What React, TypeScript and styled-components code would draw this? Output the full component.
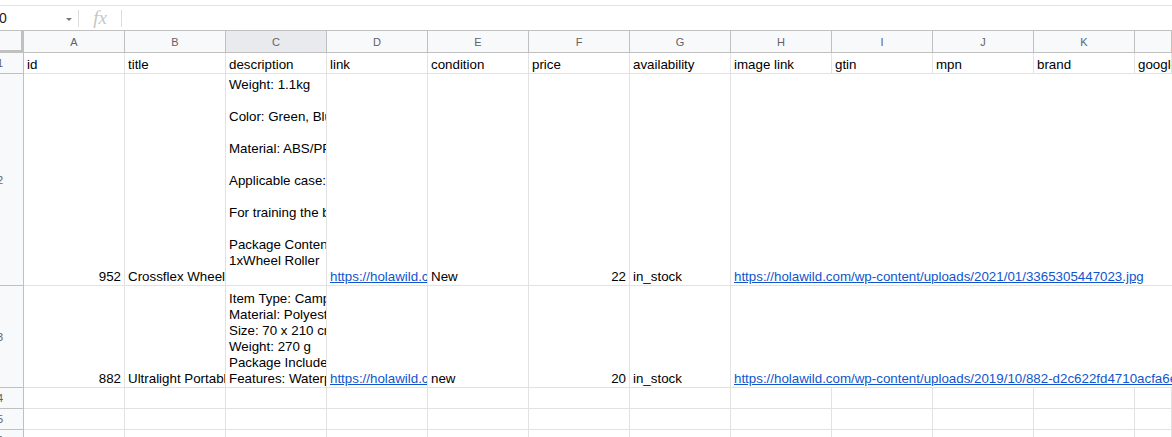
import React from 'react';
import styled, { createGlobalStyle } from 'styled-components';

const GlobalStyle = createGlobalStyle`
  html, body {
    margin: 0;
    padding: 0;
    background: #fff;
    overflow: hidden;
  }
  body {
    font-family: "Liberation Sans", Arial, sans-serif;
  }
`;

const Page = styled.div`
  width: 1172px;
  height: 437px;
  overflow: hidden;
  background: #fff;
`;

const TopStrip = styled.div`
  height: 5px;
  border-bottom: 1px solid #e3e3e3;
`;

const FormulaBar = styled.div`
  display: flex;
  align-items: center;
  height: 24px;
`;

const NameBox = styled.div`
  width: 79px;
  display: flex;
  align-items: center;
  justify-content: space-between;
  padding-right: 6px;
  box-sizing: border-box;
  font-size: 14px;
  color: #202124;
  margin-left: -1px;
`;

const Caret = styled.span`
  width: 0;
  height: 0;
  border-left: 3px solid transparent;
  border-right: 3px solid transparent;
  border-top: 3px solid #777;
  margin-top: 2px;
`;

const Divider = styled.div`
  width: 1px;
  height: 17px;
  background: #dadce0;
`;

const FxLabel = styled.div`
  width: 42px;
  text-align: center;
  font-family: "Liberation Serif", serif;
  font-style: italic;
  font-size: 19px;
  color: #c4c7c5;
  line-height: 20px;
`;

const Grid = styled.div`
  display: flex;
  flex-direction: column;
`;

const Row = styled.div<{ $h: number }>`
  display: flex;
  height: ${p => p.$h}px;
  flex-shrink: 0;
`;

const Corner = styled.div`
  width: 24px;
  flex-shrink: 0;
  box-sizing: border-box;
  background: #f8f9fa;
  border-right: 3px solid #c0c0c0;
  border-bottom: 3px solid #c0c0c0;
  border-top: 1px solid #c0c0c0;
`;

const ColHead = styled.div<{ $active?: boolean; $grow?: boolean }>`
  width: ${p => (p.$grow ? 'auto' : '101px')};
  flex: ${p => (p.$grow ? '1 0 0' : '0 0 auto')};
  box-sizing: border-box;
  background: ${p => (p.$active ? '#e8eaed' : '#f8f9fa')};
  border-right: 1px solid #c0c0c0;
  border-bottom: 1px solid #c0c0c0;
  border-top: 1px solid #c0c0c0;
  display: flex;
  align-items: center;
  justify-content: center;
  font-size: 11px;
  color: #5f6368;
`;

const RowHead = styled.div`
  width: 24px;
  flex-shrink: 0;
  box-sizing: border-box;
  background: #f8f9fa;
  border-right: 1px solid #c0c0c0;
  border-bottom: 1px solid #c0c0c0;
  overflow: hidden;
  display: flex;
  align-items: center;
`;

const RowNum = styled.span`
  width: 46px;
  flex-shrink: 0;
  margin-left: -23px;
  text-align: center;
  font-size: 11px;
  color: #5f6368;
`;

const Cell = styled.div<{ $right?: boolean; $grow?: boolean; $noLine?: boolean }>`
  width: ${p => (p.$grow ? 'auto' : '101px')};
  flex: ${p => (p.$grow ? '1 0 0' : '0 0 auto')};
  box-sizing: border-box;
  border-right: ${p => (p.$noLine ? 'none' : '1px solid #e2e2e2')};
  border-bottom: 1px solid #e2e2e2;
  padding: 0 3px 0 3px;
  display: flex;
  flex-direction: column;
  justify-content: flex-end;
  align-items: ${p => (p.$right ? 'flex-end' : 'flex-start')};
  overflow: hidden;
  font-size: 13.33px;
  line-height: 16px;
  color: #000;
  white-space: pre;
`;

const Link = styled.span`
  color: #1155cc;
  text-decoration: underline;
`;

const cols = ['A', 'B', 'C', 'D', 'E', 'F', 'G', 'H', 'I', 'J', 'K', ''];
const headers = ['id', 'title', 'description', 'link', 'condition', 'price', 'availability', 'image link', 'gtin', 'mpn', 'brand', 'google_product_category'];

const desc1 = [
  'Weight: 1.1kg',
  '',
  'Color: Green, Blue, Black',
  '',
  'Material: ABS/PP/Foam',
  '',
  'Applicable case: Home, Gym',
  '',
  'For training the body muscles',
  '',
  'Package Contents:',
  '1xWheel Roller',
  '\u00a0',
].join('\n');

const desc2 = [
  'Item Type: Camping Mat',
  'Material: Polyester',
  'Size: 70 x 210 cm',
  'Weight: 270 g',
  'Package Includes: 1 x Mat',
  'Features: Waterproof',
].join('\n');

const EmptyRow: React.FC<{ n: number }> = ({ n }) => (
  <Row $h={21}>
    <RowHead><RowNum>{n}</RowNum></RowHead>
    {cols.map((c, i) => (
      <Cell key={i} $grow={i === cols.length - 1} />
    ))}
  </Row>
);

const App: React.FC = () => (
  <Page>
    <GlobalStyle />
    <TopStrip />
    <FormulaBar>
      <NameBox>
        <span>0</span>
        <Caret />
      </NameBox>
      <Divider />
      <FxLabel>fx</FxLabel>
      <Divider />
    </FormulaBar>
    <Grid>
      <Row $h={23}>
        <Corner />
        {cols.map((c, i) => (
          <ColHead key={i} $active={c === 'C'} $grow={i === cols.length - 1}>
            {c}
          </ColHead>
        ))}
      </Row>
      <Row $h={21}>
        <RowHead><RowNum>1</RowNum></RowHead>
        {headers.map((h, i) => (
          <Cell key={h} $grow={i === headers.length - 1}>{h}</Cell>
        ))}
      </Row>
      <Row $h={212}>
        <RowHead><RowNum>2</RowNum></RowHead>
        <Cell $right>952</Cell>
        <Cell>Crossflex Wheel Roller</Cell>
        <Cell>{desc1}</Cell>
        <Cell><Link>https://holawild.com/product/crossflex-wheel-roller/</Link></Cell>
        <Cell>New</Cell>
        <Cell $right>22</Cell>
        <Cell>in_stock</Cell>
        <Cell $grow $noLine>
          <Link>https://holawild.com/wp-content/uploads/2021/01/3365305447023.jpg</Link>
        </Cell>
      </Row>
      <Row $h={102}>
        <RowHead><RowNum>3</RowNum></RowHead>
        <Cell $right>882</Cell>
        <Cell>Ultralight Portable Sleeping Pad</Cell>
        <Cell>{desc2}</Cell>
        <Cell><Link>https://holawild.com/product/ultralight-portable-sleeping-pad/</Link></Cell>
        <Cell>new</Cell>
        <Cell $right>20</Cell>
        <Cell>in_stock</Cell>
        <Cell $grow $noLine>
          <Link>https://holawild.com/wp-content/uploads/2019/10/882-d2c622fd4710acfa6e3b.jpg</Link>
        </Cell>
      </Row>
      <EmptyRow n={4} />
      <EmptyRow n={5} />
      <EmptyRow n={6} />
    </Grid>
  </Page>
);

export default App;
